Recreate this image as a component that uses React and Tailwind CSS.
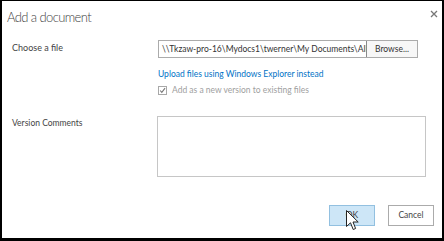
export default function App() {
  const font = { fontFamily: 'Lato, "Open Sans", "Liberation Sans", sans-serif' }
  const path = '\\\\Tkzaw-pro-16\\Mydocs1\\twerner\\My Documents\\All'

  return (
    <div
      className="w-[444px] h-[241px] bg-white border-black border-l-2 border-t-[1px] border-r-2 border-b-[3px] relative overflow-hidden text-[#444]"
      style={font}
    >
      <div className="flex items-start justify-between pl-[5px] pr-[4px] pt-[6px]">
        <h1 className="text-[13px] leading-[20px] font-light tracking-[-0.6px] text-[#444]">Add a document</h1>
        <svg className="w-[8px] h-[8px] mt-[3px]" viewBox="0 0 8 8">
          <path d="M1 1 L7 7 M7 1 L1 7" stroke="#777" strokeWidth="1.3" />
        </svg>
      </div>

      <div className="flex pl-[10px] mt-[13px]">
        <div className="w-[146px] text-[9px] leading-[14px] pt-[1px]">Choose a file</div>
        <div className="flex flex-col">
          <div className="flex h-[18px] w-[260px] border border-[#ababab] bg-white">
            <div className="flex-1 text-[8.5px] leading-[16px] pl-[3px] overflow-hidden whitespace-nowrap text-[#333]">
              {path}
            </div>
            <div className="w-[51px] shrink-0 border-l border-[#8a8a8a] bg-[#f7f7f7] text-[8.5px] leading-[16px] text-center text-[#333]">
              Browse...
            </div>
          </div>
          <a className="mt-[10px] text-[8.5px] leading-[12px] text-[#0072c6]">
            Upload files using Windows Explorer instead
          </a>
          <label className="flex items-center gap-[5px] mt-[4px] text-[8.5px] leading-[12px] text-[#a0a0a0]">
            <span className="w-[9px] h-[9px] border border-[#a8a8a8] bg-white flex items-center justify-center">
              <svg viewBox="0 0 9 9" className="w-[9px] h-[9px]">
                <path d="M1.5 4.5 L3.6 6.8 L7.8 1.5" fill="none" stroke="#777" strokeWidth="1.4" />
              </svg>
            </span>
            Add as a new version to existing files
          </label>
        </div>
      </div>

      <div className="flex pl-[10px] mt-[20px]">
        <div className="w-[145px] text-[8.5px] leading-[12px] pt-[1px]">Version Comments</div>
        <div className="w-[269px] h-[61px] border border-[#c6c6c6] bg-white" />
      </div>

      <div className="flex justify-end gap-[13px] pr-[8px] mt-[28px]">
        <div className="w-[46px] h-[21px] border border-[#92c0e0] bg-[#cde6f7] text-[8.5px] leading-[19px] text-center text-[#444]">
          OK
        </div>
        <div className="w-[46px] h-[21px] border border-[#ababab] bg-white text-[8.5px] leading-[19px] text-center text-[#444]">
          Cancel
        </div>
      </div>

      <svg className="absolute left-[344px] top-[209px] w-[13px] h-[21px]" viewBox="0 0 13 21">
        <path
          d="M0.5 0.5 L0.5 16.5 L4.5 12.8 L7.2 19.5 L9.6 18.5 L7 12 L12.2 12 Z"
          fill="#fff"
          stroke="#222"
          strokeWidth="1"
          strokeLinejoin="round"
        />
      </svg>
    </div>
  )
}
